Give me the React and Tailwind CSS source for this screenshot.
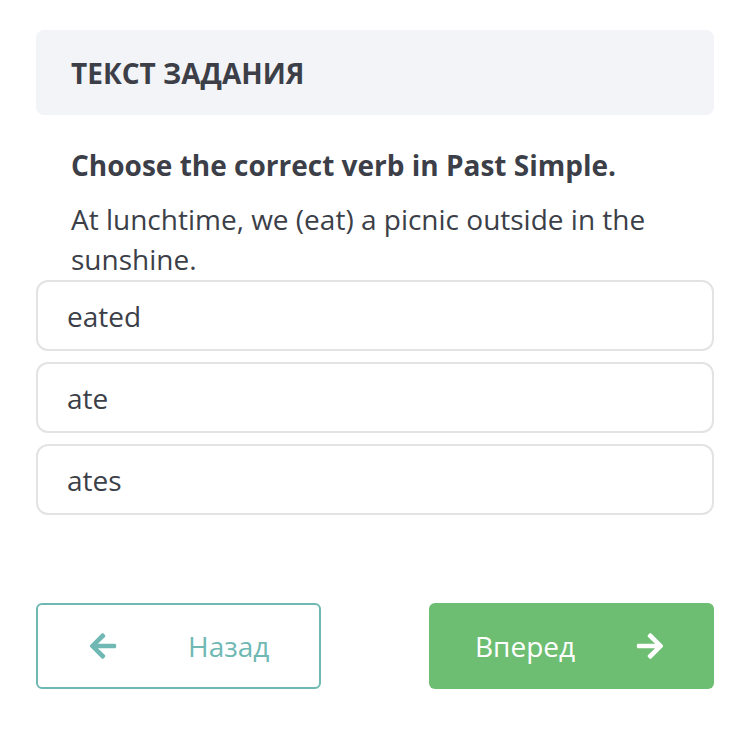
import React from 'react';
import { FaArrowLeft, FaArrowRight } from 'react-icons/fa';

const options = ['eated', 'ate', 'ates'];

const App = () => {
    return (
        <div className="w-[750px] h-[750px] bg-white px-[36px] pt-[30px] font-['Open_Sans',sans-serif] text-[#3c3f48]">
            {/* Task header */}
            <div className="h-[85px] rounded-lg bg-[#f3f4f7] flex items-center px-[35px]">
                <h2 className="text-[28px] font-bold leading-[36px]">ТЕКСТ ЗАДАНИЯ</h2>
            </div>

            {/* Question */}
            <div className="px-[35px] pt-[30px]">
                <p className="text-[28px] font-bold leading-[40px]">Choose the correct verb in Past Simple.</p>
                <p className="text-[28px] leading-[40px] mt-[14px]">At lunchtime, we (eat) a picnic outside in the sunshine.</p>
            </div>

            {/* Answers */}
            <div className="flex flex-col gap-[11px] mt-[1px]">
                {options.map(opt => (
                    <div key={opt} className="h-[71px] rounded-xl border-2 border-[#e3e3e3] flex items-center px-[29px] text-[28px]">
                        {opt}
                    </div>
                ))}
            </div>

            {/* Navigation */}
            <div className="flex justify-between mt-[88px]">
                <button className="w-[285px] h-[86px] rounded-md border-2 border-[#6fb8b3] flex items-center pl-[50px] text-[#6fb8b3] text-[28px]">
                    <FaArrowLeft size={30} />
                    <span className="ml-[70px]">Назад</span>
                </button>
                <button className="w-[285px] h-[86px] rounded-md bg-[#6dbe72] flex items-center pl-[46px] text-white text-[28px]">
                    <span>Вперед</span>
                    <FaArrowRight size={30} className="ml-[60px]" />
                </button>
            </div>
        </div>
    );
};

export default App;
